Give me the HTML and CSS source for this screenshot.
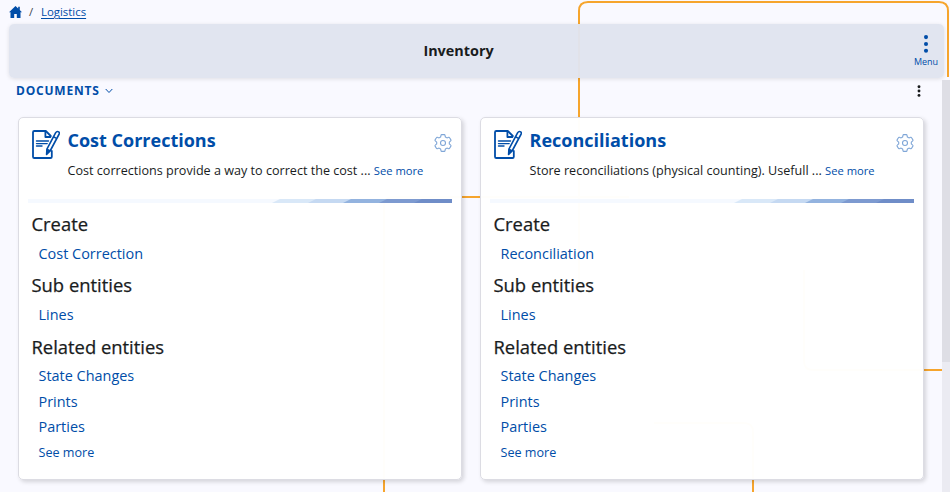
FILE: index.html
```
<!DOCTYPE html>
<html lang="en">
<head>
<meta charset="utf-8">
<title>Inventory</title>
<link rel="stylesheet" href="styles.css">
</head>
<body>
<svg class="symbols" aria-hidden="true">
  <symbol id="doc" viewBox="0 0 28 30">
    <g fill="none" stroke="currentColor" stroke-width="1.8" stroke-linejoin="round" stroke-linecap="round">
      <path d="M18.800 6 13.800 1H2.3Q1 1 1 2.3v24.4Q1 28 2.3 28h16.2q1.3 0 1.3-1.3V21"/>
      <path d="M13.4 1.4V7h5"/>
      <path d="M4.5 11h12M4.5 13.6h10.7M4.5 16h5.5" stroke-width="1.4"/>
      <path d="m14.9 19.2 8.8-16.6q1.2-1.8 3-.7 1.2 1 .2 2.6L18.1 21l-3.5 3.4zM21.4 6.6l3.4 2M14.9 19.2l3.2 1.8" stroke-width="1.6"/>
    </g>
    <path d="m14.6 19.5 3 1.8-3.2 3.5z" fill="currentColor"/>
  </symbol>
  <symbol id="gear" viewBox="0 0 18 18">
    <g fill="none" stroke="currentColor" stroke-width="1.1" stroke-linejoin="round">
      <path d="M7.700.6h2.600q.6 0 .7.700l.4 1.700 1.500.9 1.800-.6q.6-.2.9.4l1.300 2.200q.3.600-.2 1L15.300 8.100v1.800l1.400 1.200q.5.400.2 1l-1.300 2.200q-.3.600-.9.400l-1.800-.6-1.500.9-.4 1.700q-.1.700-.7.700H7.700q-.6 0-.7-.7L6.600 15l-1.500-.9-1.800.6q-.6.200-.9-.4l-1.300-2.200q-.3-.6.200-1l1.400-1.200V8.100L1.300 6.900q-.5-.4-.2-1l1.300-2.200q.3-.6.9-.4l1.800.6L6.600 3 7 1.300Q7.100.6 7.700.6z"/>
      <circle cx="9" cy="9" r="2.500"/>
    </g>
  </symbol>
</svg>
<svg class="backdrop" viewBox="0 0 950 492" aria-hidden="true">
  <path d="M579 300V11q0-9 9-9h351q9 0 9 9v66"/>
  <path d="M384 492V206q0-9 9-9h236"/>
  <path d="M753 492V432q0-9-9-9h-90M942 370H813q-9 0-9-9V270"/>
</svg>
<nav class="crumbs">
  <svg class="home" viewBox="0 0 13 12"><path d="M6.500 0 0 6.300h1.500V12h3.700V8h2.600v4h3.700V6.300H13L10.800 4.100V.7H9.200v1.800z"/></svg>
  <span class="slash">/</span><a class="crumb">Logistics</a>
</nav>
<header class="bar">
  <h1>Inventory</h1>
  <div class="menu">
    <svg viewBox="0 0 6 18"><circle cx="3" cy="2.100" r="2.050"/><circle cx="3" cy="9" r="2.050"/><circle cx="3" cy="15.800" r="2.050"/></svg>
    <span>Menu</span>
  </div>
</header>
<main>
  <div class="section">
    <h2>DOCUMENTS</h2>
    <svg class="chev" viewBox="0 0 8 6"><path d="m.7 1 3.300 3.500L7.300 1"/></svg>
    <svg class="more" viewBox="0 0 4 12"><circle cx="2" cy="1.700" r="1.450"/><circle cx="2" cy="6" r="1.450"/><circle cx="2" cy="10.400" r="1.450"/></svg>
  </div>
  <div class="cards">
    <article class="card">
      <div class="top">
        <svg class="doc"><use href="#doc"/></svg>
        <div class="heading"><h3>Cost Corrections</h3><p>Cost corrections provide a way to correct the cost ... <a>See more</a></p></div>
        <svg class="gear"><use href="#gear"/></svg>
      </div>
      <svg class="stripe" viewBox="0 0 424 4" preserveAspectRatio="none"><path fill="#f5f9ff" d="M0 0h424v4H0z"/><path fill="#d9e8f8" d="m252 0-8 4h180V0z"/><path fill="#c5d9f2" d="m288 0-8 4h144V0z"/><path fill="#93b3df" d="m323 0-8 4h109V0z"/><path fill="#7d9ad0" d="m359 0-8 4h73V0z"/><path fill="#6f8dc8" d="m394 0-8 4h38V0z"/></svg>
      <h4>Create</h4>
      <ul><li>Cost Correction</li></ul>
      <h4>Sub entities</h4>
      <ul><li>Lines</li></ul>
      <h4>Related entities</h4>
      <ul><li>State Changes</li><li>Prints</li><li>Parties</li><li class="small">See more</li></ul>
    </article>
    <article class="card">
      <div class="top">
        <svg class="doc"><use href="#doc"/></svg>
        <div class="heading"><h3>Reconciliations</h3><p>Store reconciliations (physical counting). Usefull ... <a>See more</a></p></div>
        <svg class="gear"><use href="#gear"/></svg>
      </div>
      <svg class="stripe" viewBox="0 0 424 4" preserveAspectRatio="none"><path fill="#f5f9ff" d="M0 0h424v4H0z"/><path fill="#d9e8f8" d="m252 0-8 4h180V0z"/><path fill="#c5d9f2" d="m288 0-8 4h144V0z"/><path fill="#93b3df" d="m323 0-8 4h109V0z"/><path fill="#7d9ad0" d="m359 0-8 4h73V0z"/><path fill="#6f8dc8" d="m394 0-8 4h38V0z"/></svg>
      <h4>Create</h4>
      <ul><li>Reconciliation</li></ul>
      <h4>Sub entities</h4>
      <ul><li>Lines</li></ul>
      <h4>Related entities</h4>
      <ul><li>State Changes</li><li>Prints</li><li>Parties</li><li class="small">See more</li></ul>
    </article>
  </div>
</main>
<div class="scrollbar"><div class="thumb"></div></div>
</body>
</html>
```
FILE: styles.css
```
* { box-sizing: border-box; margin: 0; padding: 0; }
body {
  width: 950px;
  height: 492px;
  overflow: hidden;
  position: relative;
  background: #f9f9ff;
  color: #191c1d;
  font-family: "Open Sans", "Noto Sans", sans-serif;
}
svg { display: block; flex: none; }
.symbols { position: absolute; width: 0; height: 0; }
.backdrop {
  position: absolute;
  inset: 0;
  width: 950px;
  height: 492px;
  z-index: -1;
  fill: none;
  stroke: #f6a52d;
  stroke-width: 2;
}
a, li { color: #004da8; }
.crumbs { display: flex; height: 24px; padding-left: 9px; align-items: center; font-size: 11.400px; line-height: 24px; }
.home { width: 13px; height: 12px; fill: #004da8; }
.slash { width: 19px; padding-left: 7px; color: #444a50; }
.crumb { text-decoration: underline; text-underline-offset: 2px; }
.bar {
  display: grid;
  grid-template-columns: 36px 1fr 36px;
  align-items: center;
  width: 935px;
  height: 54px;
  margin-left: 9px;
  border-radius: 5px;
  background: rgba(224, 228, 239, .97);
  box-shadow: 0 1px 4px rgba(0, 0, 0, .11);
}
h1 { grid-column: 2; text-align: center; font-size: 14.400px; line-height: 20px; padding-right: 36px; }
.menu { display: flex; flex-direction: column; align-items: center; color: #004da8; font-size: 9px; line-height: 13px; gap: 2px; padding-top: 1px; }
.menu svg { width: 6px; height: 18px; fill: currentColor; }
.section { display: flex; align-items: center; height: 25px; padding: 0 29.500px 0 16px; width: 950px; }
h2 { font-size: 12px; line-height: 20px; letter-spacing: .8px; color: #004da8; }
.chev { width: 8px; height: 6px; margin-left: 5px; fill: none; stroke: #004da8; stroke-width: 1; }
.more { width: 4px; height: 12px; margin-left: auto; fill: #191c1d; }
.cards { display: grid; grid-template-columns: 444px 444px; gap: 18px; padding: 14px 0 0 18px; }
.card {
  height: 363px;
  padding: 12px 9px 0;
  border: 1px solid #dcdce3;
  border-radius: 5px;
  background: rgba(255, 255, 255, .985);
  box-shadow: 2px 2px 4px rgba(0, 0, 0, .15);
}
.top { display: flex; height: 69px; padding: 0 0 0 4px; align-items: flex-start; }
.doc { width: 28px; height: 30px; color: #004da8; }
.heading { flex: 1; padding-left: 7.500px; }
h3 { font-size: 18px; line-height: 20px; color: #004da8; }
p { font-size: 12.600px; line-height: 20px; margin-top: 11px; white-space: nowrap; }
p a { font-size: 11.200px; }
.gear { width: 18px; height: 18px; margin-top: 4px; color: #7fa6d7; }
.stripe { width: 424px; height: 4px; }
h4 { font-size: 18.400px; font-weight: 400; -webkit-text-stroke: .25px currentColor; line-height: 24px; padding-left: 3.500px; }
.stripe + h4 { margin-top: 9px; }
ul { list-style: none; padding: 5px 0 6.500px 10.500px; }
ul:nth-of-type(2) { padding-bottom: 7.500px; }
ul:nth-of-type(3) { padding-top: 4px; }
li { font-size: 14.450px; line-height: 25.500px; }
li.small { font-size: 12.600px; }
.scrollbar { position: absolute; right: 0; top: 80px; width: 8px; height: 412px; background: #ebebf2; }
.thumb { height: 282px; background: #dedee5; }
```
